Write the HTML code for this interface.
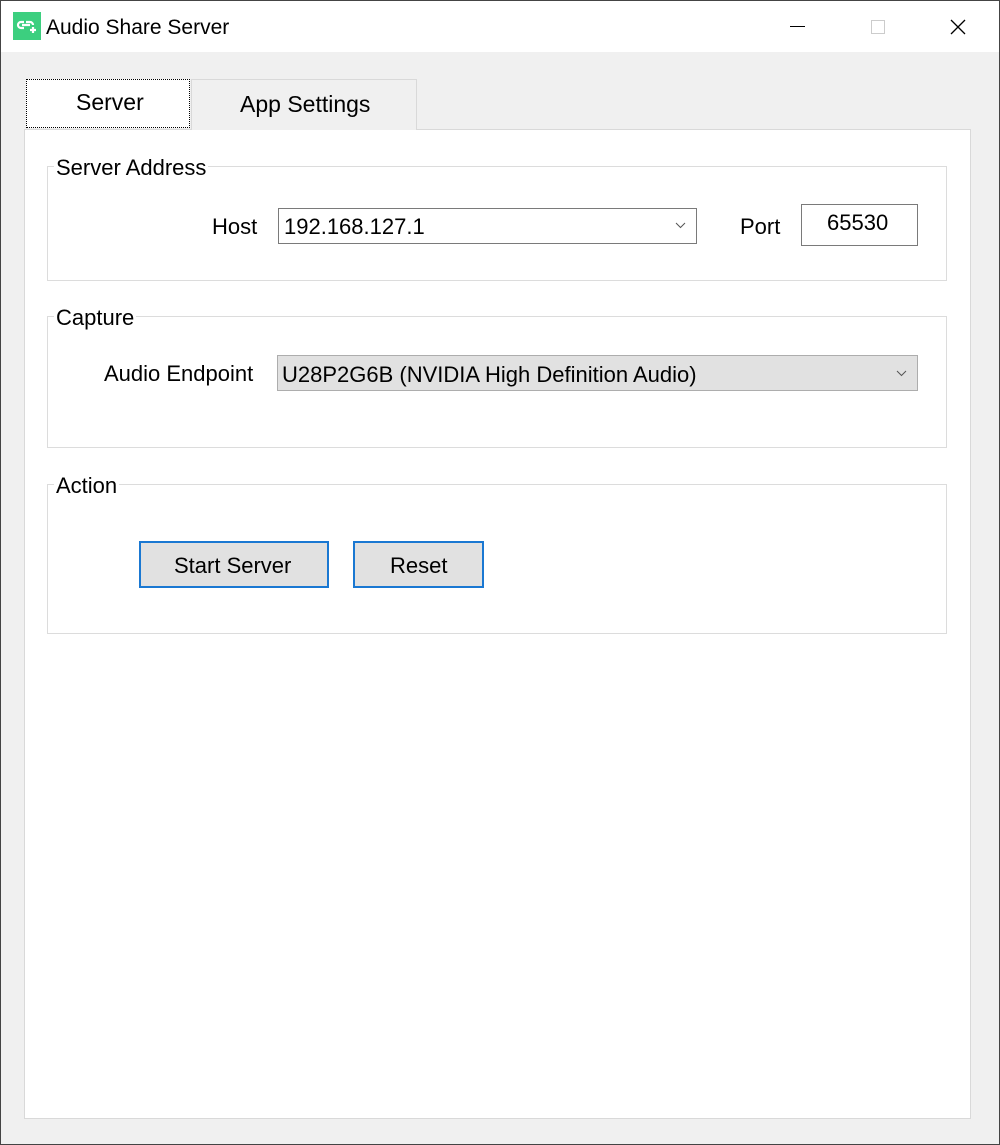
<!DOCTYPE html>
<html><head><style>
body{margin:0;width:1000px;height:1145px;overflow:hidden;font-family:"Liberation Sans",sans-serif;color:#000}
.a{position:absolute;box-sizing:border-box}
.t{position:absolute;font-size:22px;line-height:24px;white-space:nowrap}
.grp{position:absolute;border:1px solid #dcdcdc;box-sizing:border-box}
.gl{position:absolute;background:#fff;font-size:22px;line-height:24px;padding:0 2px 0 2px}
</style></head><body>
<div class="a" style="left:0;top:0;width:1000px;height:1145px;border:1px solid #444;background:#f0f0f0"></div>
<div class="a" style="left:1px;top:1px;width:998px;height:51px;background:#fff"></div>
<div class="a" style="left:13px;top:12px;width:28px;height:28px;background:#3ccf7f"></div>
<svg class="a" style="left:13px;top:12px" width="28" height="28" viewBox="0 0 28 28"><path d="M11 10H8a3 3 0 0 0 0 6h3M9 13h8M13 10h4a3 3 0 0 1 3 3M20 15v6M17 18h6" stroke="#fff" stroke-width="2.2" fill="none"/></svg>
<div class="t" style="left:46px;top:16px;font-size:21px">Audio Share Server</div>
<div class="a" style="left:790px;top:26px;width:15px;height:1px;background:#000"></div>
<div class="a" style="left:871px;top:20px;width:14px;height:14px;border:1px solid #ccc"></div>
<svg class="a" style="left:950px;top:19px" width="16" height="16"><path d="M1 1L15 15M15 1L1 15" stroke="#000" stroke-width="1.3"/></svg>
<div class="a" style="left:24px;top:129px;width:947px;height:990px;background:#fff;border:1px solid #d9d9d9"></div>
<div class="a" style="left:191px;top:79px;width:226px;height:51px;background:#f0f0f0;border:1px solid #d9d9d9;border-bottom:none"></div>
<div class="t" style="left:240px;top:92px;font-size:23px">App Settings</div>
<div class="a" style="left:26px;top:79px;width:164px;height:49px;background:#fff;border:1px dotted #000"></div>
<div class="t" style="left:76px;top:90px;font-size:23px">Server</div>

<div class="grp" style="left:47px;top:166px;width:900px;height:115px"></div>
<div class="gl" style="left:54px;top:156px">Server Address</div>
<div class="t" style="left:212px;top:215px">Host</div>
<div class="a" style="left:278px;top:208px;width:419px;height:36px;border:1px solid #7a7a7a;background:#fff"></div>
<div class="t" style="left:284px;top:215px">192.168.127.1</div>
<svg class="a" style="left:675px;top:222px" width="11" height="7"><path d="M1 1l4.5 4.5L10 1" stroke="#555" fill="none"/></svg>
<div class="t" style="left:740px;top:215px">Port</div>
<div class="a" style="left:801px;top:204px;width:117px;height:42px;border:1px solid #7a7a7a;background:#fff"></div>
<div class="t" style="left:827px;top:211px">65530</div>

<div class="grp" style="left:47px;top:316px;width:900px;height:132px"></div>
<div class="gl" style="left:54px;top:306px">Capture</div>
<div class="t" style="left:104px;top:362px">Audio Endpoint</div>
<div class="a" style="left:277px;top:355px;width:641px;height:36px;border:1px solid #adadad;background:#e1e1e1"></div>
<div class="t" style="left:282px;top:363px">U28P2G6B (NVIDIA High Definition Audio)</div>
<svg class="a" style="left:896px;top:370px" width="11" height="7"><path d="M1 1l4.5 4.5L10 1" stroke="#555" fill="none"/></svg>

<div class="grp" style="left:47px;top:484px;width:900px;height:150px"></div>
<div class="gl" style="left:54px;top:474px">Action</div>
<div class="a" style="left:139px;top:541px;width:190px;height:47px;border:2px solid #1a78d2;background:#e1e1e1"></div>
<div class="t" style="left:174px;top:554px">Start Server</div>
<div class="a" style="left:353px;top:541px;width:131px;height:47px;border:2px solid #1a78d2;background:#e1e1e1"></div>
<div class="t" style="left:390px;top:554px">Reset</div>
</body></html>
